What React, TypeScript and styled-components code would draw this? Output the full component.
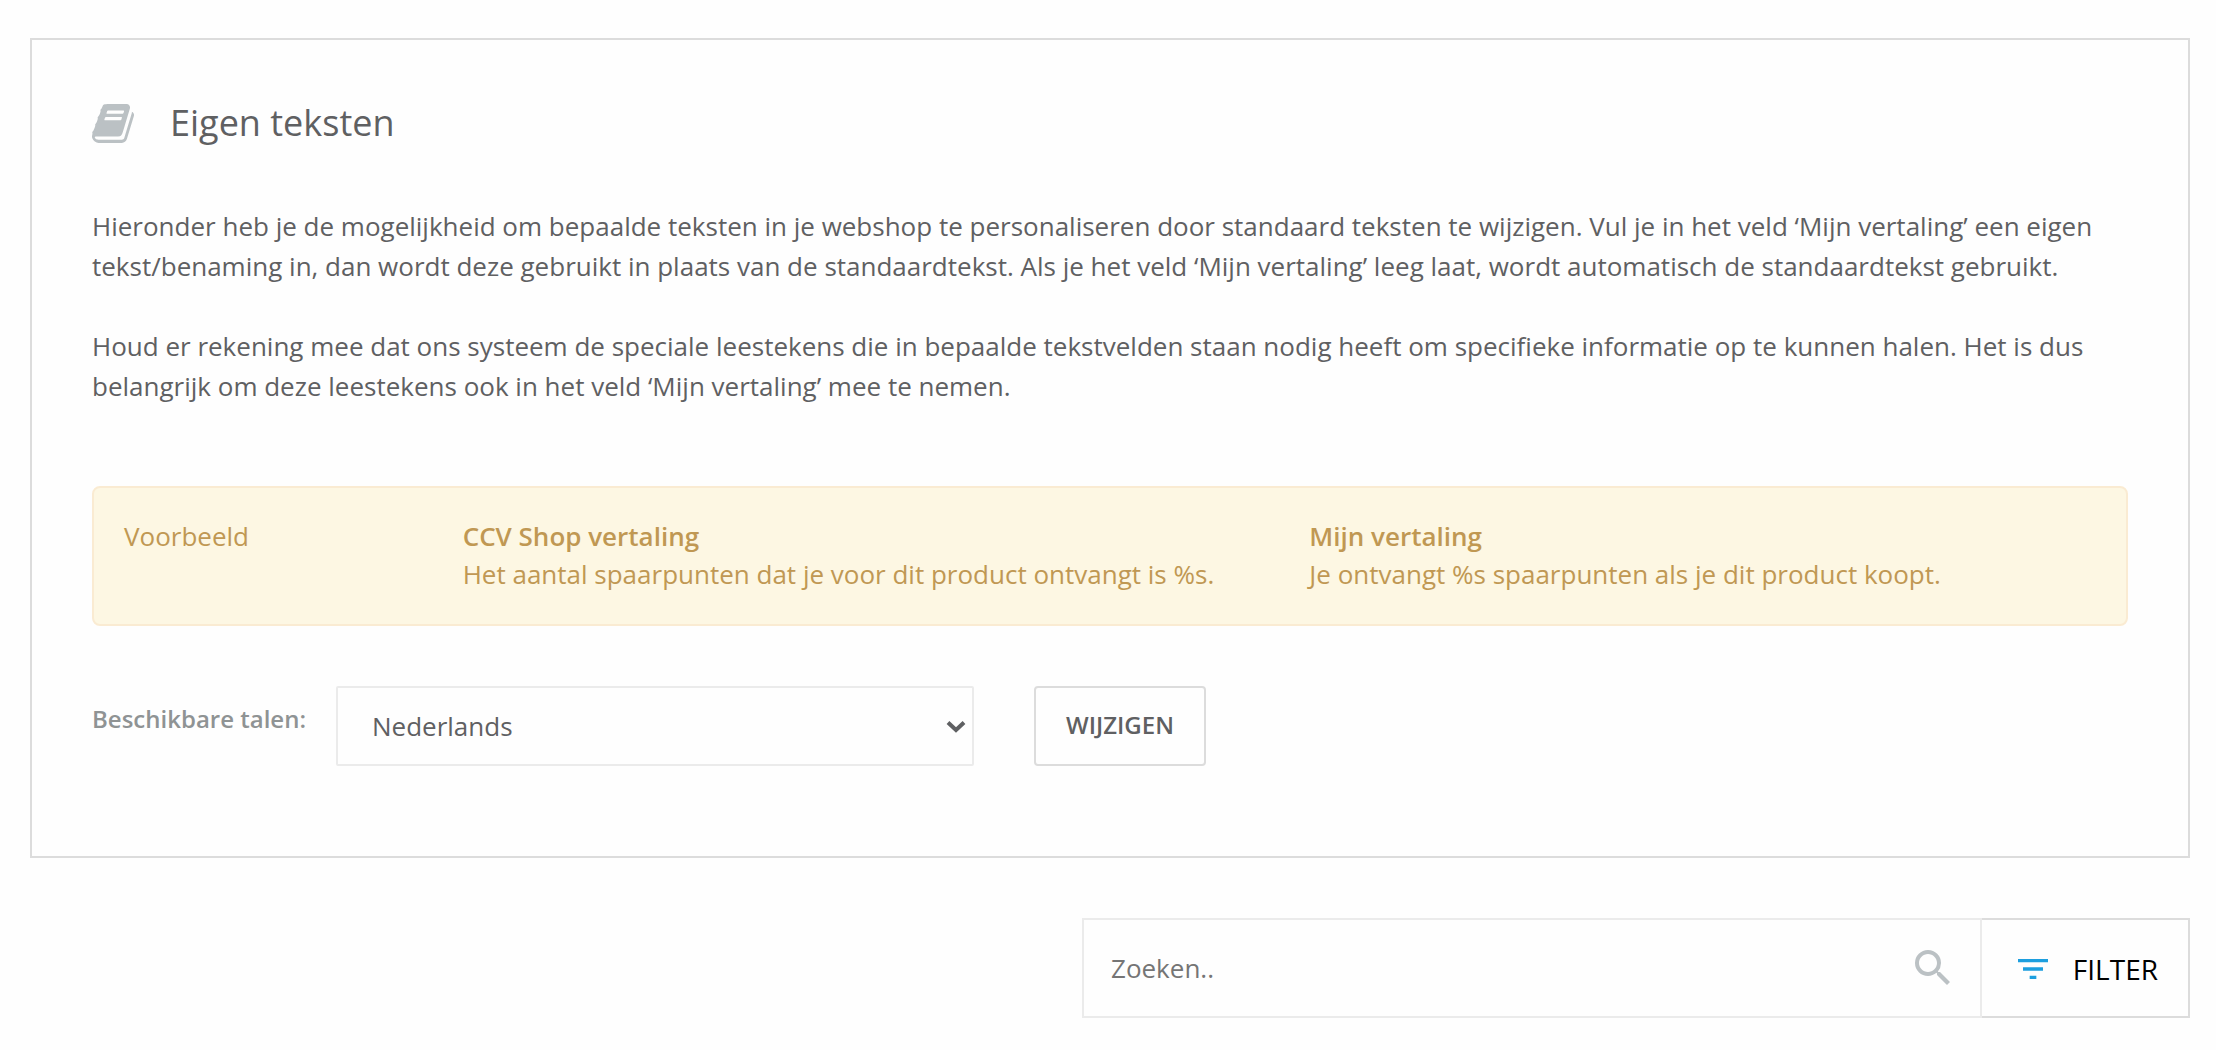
import React from 'react';
import styled, { createGlobalStyle } from 'styled-components';

const GlobalStyle = createGlobalStyle`
  *, *::before, *::after { box-sizing: border-box; }
  body {
    margin: 0;
    background: #fefefe;
    color: #5f6062;
    font-family: "Open Sans", "Noto Sans", sans-serif;
    font-size: 26px;
    line-height: 40px;
  }
  button, input, select { font: inherit; color: inherit; margin: 0; }
`;

const Page = styled.main`
  padding: 38px 26px 32px 30px;
  display: flex;
  flex-direction: column;
  gap: 60px;
`;

const Card = styled.section`
  border: 2px solid #dcdcdc;
  padding: 60px 60px 90px;
`;

const CardHeader = styled.header`
  display: flex;
  align-items: center;
  gap: 36px;
  margin-bottom: 60px;
`;

const BookIcon = styled.svg`
  width: 42px;
  height: 39px;
  fill: #bbc1c4;
`;

const Title = styled.h1`
  margin: 0;
  font-size: 36px;
  line-height: 46px;
  font-weight: 400;
`;

const Intro = styled.div`
  margin-bottom: 80px;
`;

const Paragraph = styled.p`
  margin: 0;
  & + & { margin-top: 40px; }
`;

const Example = styled.div`
  display: grid;
  grid-template-columns: 2fr 5fr 5fr;
  margin-bottom: 60px;
  padding: 29px 0 31px;
  border: 2px solid #faebd2;
  border-radius: 8px;
  background: #fdf7e3;
  color: #c09853;
  line-height: 38px;
`;

const ExampleColumn = styled.div`
  padding: 0 30px;
`;

const ExampleHeading = styled.strong`
  display: block;
  font-weight: 600;
`;

const LanguageForm = styled.form`
  display: flex;
  align-items: flex-start;
`;

const Label = styled.label`
  margin-right: 30px;
  font-size: 24px;
  line-height: 66px;
  font-weight: 600;
  color: #8f9394;
`;

const SelectBox = styled.div`
  display: grid;
  align-items: center;
  width: 638px;
  margin-right: 60px;
`;

const Select = styled.select`
  grid-area: 1 / 1;
  appearance: none;
  width: 100%;
  height: 80px;
  padding: 0 50px 0 34px;
  border: 2px solid #ebebeb;
  border-radius: 2px;
  background: transparent;
`;

const Chevron = styled.svg`
  grid-area: 1 / 1;
  justify-self: end;
  width: 20px;
  height: 14px;
  margin-right: 8px;
  fill: none;
  stroke: #5f6062;
  stroke-width: 4;
  pointer-events: none;
`;

const SubmitButton = styled.button`
  height: 80px;
  padding: 0 30px 2px;
  border: 2px solid #dcdcdc;
  border-radius: 4px;
  background: transparent;
  font-size: 24px;
  font-weight: 600;
  cursor: pointer;
`;

const Toolbar = styled.div`
  display: flex;
  align-self: flex-end;
  width: 1108px;
  max-width: 100%;
  height: 100px;
`;

const SearchField = styled.form`
  flex: 1;
  display: flex;
  align-items: center;
  border: 2px solid #ebebeb;
`;

const SearchInput = styled.input`
  flex: 1;
  min-width: 0;
  height: 100%;
  padding: 0 27px;
  border: 0;
  background: transparent;
  &::placeholder { color: #757575; opacity: 1; }
`;

const SearchButton = styled.button`
  display: flex;
  margin-right: 23px;
  padding: 0;
  border: 0;
  background: transparent;
  cursor: pointer;
`;

const SearchIcon = styled.svg`
  width: 48px;
  height: 48px;
  fill: #bbc1c4;
`;

const FilterButton = styled.button`
  display: flex;
  align-items: center;
  gap: 20px;
  padding: 2px 30px 0 31px;
  border: 2px solid #dcdcdc;
  border-left: 0;
  background: transparent;
  color: #000;
  font-size: 28px;
  cursor: pointer;
`;

const FilterIcon = styled.svg`
  width: 40px;
  height: 40px;
  fill: #1d9fdf;
`;

const BOOK_PATH =
  'M1639 478q40 57 18 129l-275 906q-19 64-76.5 107.5t-122.5 43.5h-923q-77 0-148.5-53.5t-99.5-131.5q-24-67-2-127 0-4 3-27t4-37q1-8-3-21.5t-3-19.5q2-11 8-21t16.5-23.5 16.5-23.5q23-38 45-91.5t30-91.5q3-10 .5-30t-.5-28q3-11 17-28t17-23q21-36 42-92t25-90q1-9-2.5-32t.5-28q4-13 22-30.5t22-22.5q19-26 42.5-84.5t27.5-96.5q1-8-3-25.5t-2-26.5q2-8 9-18t18-23 17-21q8-12 16.5-30.5t15-35 16-36 19.5-32 26.5-23.5 36-11.5 47.5 5.5l-1 3q38-9 51-9h761q74 0 114 56t18 130l-274 906q-36 119-71.5 153.5t-128.5 34.5h-869q-27 0-38 15-11 16-1 43 24 70 144 70h923q29 0 56-15.5t35-41.5l300-987q7-22 5-57 38 15 59 43zm-1064 2q-4 13 2 22.5t20 9.5h608q13 0 25.5-9.5t16.5-22.5l21-64q4-13-2-22.5t-20-9.5h-608q-13 0-25.5 9.5t-16.5 22.5zm-83 256q-4 13 2 22.5t20 9.5h608q13 0 25.5-9.5t16.5-22.5l21-64q4-13-2-22.5t-20-9.5h-608q-13 0-25.5 9.5t-16.5 22.5z';

export default function App() {
  return (
    <>
      <GlobalStyle />
      <Page>
        <Card>
          <CardHeader>
            <BookIcon viewBox="0 128 1664 1536" aria-hidden="true">
              <path d={BOOK_PATH} />
            </BookIcon>
            <Title>Eigen teksten</Title>
          </CardHeader>

          <Intro>
            <Paragraph>
              Hieronder heb je de mogelijkheid om bepaalde teksten in je webshop te personaliseren door
              standaard teksten te wijzigen. Vul je in het veld ‘Mijn vertaling’ een eigen
              tekst/benaming in, dan wordt deze gebruikt in plaats van de standaardtekst. Als je het
              veld ‘Mijn vertaling’ leeg laat, wordt automatisch de standaardtekst gebruikt.
            </Paragraph>
            <Paragraph>
              Houd er rekening mee dat ons systeem de speciale leestekens die in bepaalde tekstvelden
              staan nodig heeft om specifieke informatie op te kunnen halen. Het is dus belangrijk om
              deze leestekens ook in het veld ‘Mijn vertaling’ mee te nemen.
            </Paragraph>
          </Intro>

          <Example>
            <ExampleColumn>Voorbeeld</ExampleColumn>
            <ExampleColumn>
              <ExampleHeading>CCV Shop vertaling</ExampleHeading>
              Het aantal spaarpunten dat je voor dit product ontvangt is %s.
            </ExampleColumn>
            <ExampleColumn>
              <ExampleHeading>Mijn vertaling</ExampleHeading>
              Je ontvangt %s spaarpunten als je dit product koopt.
            </ExampleColumn>
          </Example>

          <LanguageForm onSubmit={(event) => event.preventDefault()}>
            <Label htmlFor="language">Beschikbare talen:</Label>
            <SelectBox>
              <Select id="language" defaultValue="nl">
                <option value="nl">Nederlands</option>
              </Select>
              <Chevron viewBox="0 0 20 14" aria-hidden="true">
                <path d="M2 3.5 10 11l8-7.5" />
              </Chevron>
            </SelectBox>
            <SubmitButton type="submit">WIJZIGEN</SubmitButton>
          </LanguageForm>
        </Card>

        <Toolbar>
          <SearchField role="search" onSubmit={(event) => event.preventDefault()}>
            <SearchInput type="text" placeholder="Zoeken.." aria-label="Zoeken" />
            <SearchButton type="submit" aria-label="Zoeken">
              <SearchIcon viewBox="0 0 24 24" aria-hidden="true">
                <path d="M15.5 14h-.79l-.28-.27A6.471 6.471 0 0 0 16 9.5 6.5 6.5 0 1 0 9.5 16c1.61 0 3.09-.59 4.23-1.57l.27.28v.79l5 4.99L20.49 19l-4.99-5zm-6 0C7.01 14 5 11.99 5 9.5S7.01 5 9.5 5 14 7.01 14 9.5 11.99 14 9.5 14z" />
              </SearchIcon>
            </SearchButton>
          </SearchField>
          <FilterButton type="button">
            <FilterIcon viewBox="0 0 24 24" aria-hidden="true">
              <path d="M10 18h4v-2h-4v2zM3 6v2h18V6H3zm3 7h12v-2H6v2z" />
            </FilterIcon>
            FILTER
          </FilterButton>
        </Toolbar>
      </Page>
    </>
  );
}
